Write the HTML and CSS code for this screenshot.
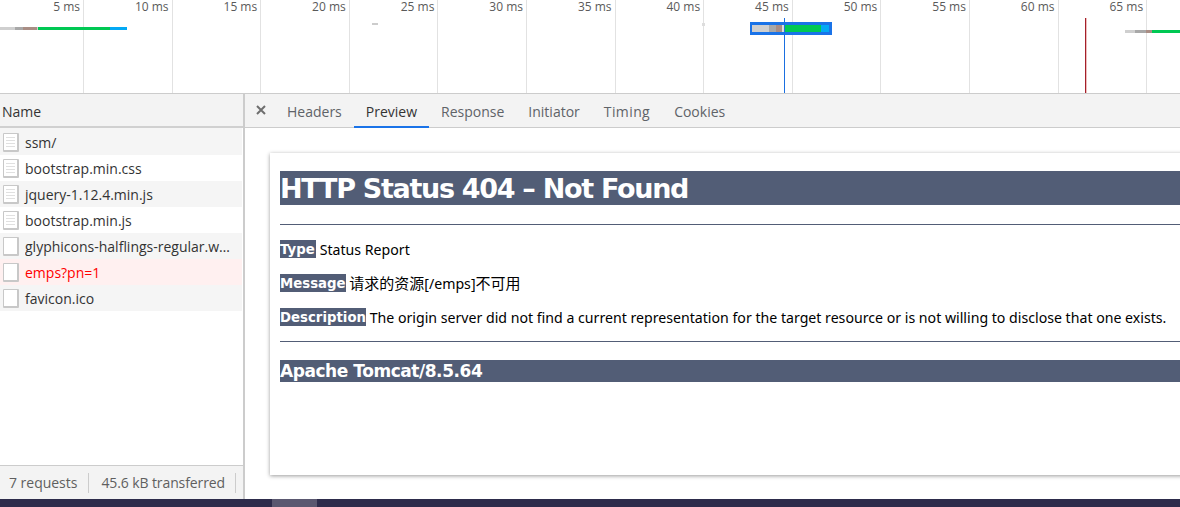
FILE: index.html
```html
<!DOCTYPE html>
<html lang="en">
<head>
<meta charset="utf-8">
<title>Network panel</title>
<link rel="stylesheet" href="styles.css">
</head>
<body>
<div class="app">
  <section class="overview">
    <div class="ticks">
      <div class="tick"><span>5 ms</span></div>
      <div class="tick"><span>10 ms</span></div>
      <div class="tick"><span>15 ms</span></div>
      <div class="tick"><span>20 ms</span></div>
      <div class="tick"><span>25 ms</span></div>
      <div class="tick"><span>30 ms</span></div>
      <div class="tick"><span>35 ms</span></div>
      <div class="tick"><span>40 ms</span></div>
      <div class="tick"><span>45 ms</span></div>
      <div class="tick"><span>50 ms</span></div>
      <div class="tick"><span>55 ms</span></div>
      <div class="tick"><span>60 ms</span></div>
      <div class="tick"><span>65 ms</span></div>
    </div>

    <div class="wf wf-a">
      <i class="seg s-light" style="width:15px"></i><i class="seg s-mid" style="width:8px"></i><i class="seg s-brown" style="width:14px"></i><i class="seg s-light" style="width:1px"></i><i class="seg s-green" style="width:72px"></i><i class="seg s-blue" style="width:17px"></i>
    </div>
    <div class="dot dot-a"></div>
    <div class="dot dot-b"></div>
    <div class="selected">
      <i class="seg s-light" style="width:17px"></i><i class="seg s-mid" style="width:7px"></i><i class="seg s-brown" style="width:6px"></i><i class="seg s-pale" style="width:2px"></i><i class="seg s-green" style="width:37px"></i><i class="seg s-blue" style="width:8px"></i>
    </div>
    <div class="line line-blue"></div>
    <div class="line line-red"></div>
    <div class="wf wf-b">
      <i class="seg s-light" style="width:10px"></i><i class="seg s-mid" style="width:11px"></i><i class="seg s-brown" style="width:6px"></i><i class="seg s-green" style="width:28px"></i>
    </div>
  </section>

  <main class="panes">
    <aside class="list">
      <header class="list-head">Name</header>
      <ul class="rows">
        <li class="row alt"><span class="file doc"><b></b></span>ssm/</li>
        <li class="row"><span class="file doc"><b></b></span>bootstrap.min.css</li>
        <li class="row alt"><span class="file doc"><b></b></span>jquery-1.12.4.min.js</li>
        <li class="row"><span class="file doc"><b></b></span>bootstrap.min.js</li>
        <li class="row alt"><span class="file"></span><span class="clip">glyphicons-halflings-regular.woff2</span></li>
        <li class="row err"><span class="file"></span>emps?pn=1</li>
        <li class="row alt"><span class="file"></span>favicon.ico</li>
      </ul>
      <footer class="status">
        <span class="stat">7 requests</span>
        <span class="stat">45.6 kB transferred</span>
      </footer>
    </aside>

    <section class="detail">
      <nav class="tabs">
        <svg class="close" width="10" height="10" viewBox="0 0 10 10" aria-hidden="true"><path d="M1 1 9 9M9 1 1 9"/></svg>
        <a class="tab">Headers</a>
        <a class="tab active">Preview</a>
        <a class="tab">Response</a>
        <a class="tab">Initiator</a>
        <a class="tab tab-wide">Timing</a>
        <a class="tab">Cookies</a>
      </nav>
      <div class="preview">
        <article class="card">
          <h1>HTTP Status 404 – Not Found</h1>
          <hr class="rule rule-top">
          <p><b>Type</b> Status Report</p>
          <p><b>Message</b> <span class="cjk">请求的资源</span>[/emps]<span class="cjk">不可用</span></p>
          <p><b>Description</b> The origin server did not find a current representation for the target resource or is not willing to disclose that one exists.</p>
          <hr class="rule rule-bottom">
          <h3>Apache Tomcat/8.5.64</h3>
        </article>
      </div>
    </section>
  </main>

  <div class="taskbar"><span class="task-item"></span></div>
</div>
</body>
</html>
```
FILE: styles.css
```css
* { box-sizing: border-box; }
html, body { margin: 0; height: 100%; overflow: hidden; background: #fff; }
body { font-family: "Open Sans", "Noto Sans", "Noto Sans CJK SC", sans-serif; font-size: 14px; color: #333; }

.app { width: 1180px; height: 507px; display: flex; flex-direction: column; overflow: hidden; }

/* Overview timeline */
.overview { position: relative; height: 94px; flex: none; border-bottom: 1px solid #ccc; background: #fff; overflow: hidden; }
.ticks { display: flex; height: 100%; }
.tick { flex: 0 0 88.6px; height: 100%; border-right: 1px solid #e2e2e2; padding-right: 3px; text-align: right; }
.tick:first-child { flex-basis: 84px; }
.tick span { font-size: 12px; line-height: 14px; color: #5a5a5a; white-space: nowrap; display: block; }
.wf { position: absolute; display: flex; height: 3px; }
.wf-a { left: 0; top: 27px; }
.wf-b { left: 1125px; top: 30px; }
.seg { display: block; height: 100%; flex: none; }
.s-light { background: #cfcfcf; }
.s-mid { background: #a8a8a8; }
.s-brown { background: #a98d84; }
.s-pale { background: #dcdcdc; }
.s-green { background: #00c853; }
.s-blue { background: #03a9f4; }
.dot { position: absolute; background: #ccc; }
.dot-a { left: 372px; top: 23px; width: 6px; height: 2px; }
.dot-b { left: 702px; top: 23px; width: 3px; height: 3px; background: #ddd; }
.selected { position: absolute; left: 750px; top: 22px; width: 82px; height: 13px; display: flex; padding: 3px 2px; background: #1a73e8; border: 0; }
.selected .seg { height: 7px; }
.line { position: absolute; top: 18px; bottom: 0; width: 1px; }
.line-blue { left: 784px; background: #1a6fe0; }
.line-red { left: 1085px; width: 2px; background: linear-gradient(90deg, #a3202a 50%, #eebcbc 50%); }

/* Panes */
.panes { flex: 1; min-height: 0; display: flex; }
.list { width: 245px; flex: none; display: flex; flex-direction: column; border-right: 2px solid #ccc; }
.list-head { height: 34px; flex: none; display: flex; align-items: center; padding: 2px 0 0 2px; background: #f3f3f3; border-bottom: 2px solid #d0d0d0; color: #333; font-size: 14px; }
.rows { list-style: none; margin: 0; padding: 0 1px 0 0; flex: 1; background: #fff; }
.row { height: 26px; display: flex; align-items: center; padding-left: 3px; color: #333; font-size: 14px; white-space: nowrap; }
.row:first-child { height: 27px; padding-top: 1px; }
.alt { background: #f5f5f5; }
.err { background: #fff0f0; color: #f00; }
.clip { display: block; width: 210px; overflow: hidden; text-overflow: ellipsis; }
.file { position: relative; flex: none; width: 16px; height: 19px; margin-right: 6px; background: #fff; border: 1px solid #c8c8c8; border-right-width: 2px; border-bottom-width: 2px; border-radius: 1px; }
.file.doc b { position: absolute; left: 2px; right: 2px; top: 3px; bottom: 3px; background: repeating-linear-gradient(180deg, #e0e0e0 0 1px, #fff 1px 3px); }
.status { height: 34px; flex: none; display: flex; align-items: center; background: #f3f3f3; border-top: 1px solid #ccc; color: #5f5f5f; font-size: 14px; }
.stat { display: flex; align-items: center; height: 20px; padding: 0 11px 0 9px; border-right: 1px solid #ccc; white-space: nowrap; letter-spacing: -.02px; }
.stat + .stat { padding: 0 10px 0 12px; letter-spacing: -.1px; }

.detail { flex: 1; min-width: 0; display: flex; flex-direction: column; }
.tabs { height: 34px; flex: none; display: flex; align-items: stretch; padding-left: 11px; background: #f3f3f3; border-bottom: 1px solid #ccc; }
.close { align-self: center; margin: 0 9px 2px 0; flex: none; }
.close path { stroke: #6e6e6e; stroke-width: 2; fill: none; }
.tab { display: flex; align-items: center; padding: 2px 12px 0; color: #5f6368; font-size: 14px; border-bottom: 2px solid transparent; margin-bottom: -1px; }
.tab.active { color: #333; border-bottom-color: #1a73e8; }
.tab-wide { letter-spacing: .4px; }

.preview { flex: 1; min-height: 0; overflow: hidden; background: #fff; padding: 25px 0 0 25px; }
.card { width: 1000px; height: 322px; padding: 18px 10px 0; background: #fff; box-shadow: 0 1px 4px rgba(0,0,0,.4); font-family: "Noto Sans", "Noto Sans CJK SC", sans-serif; color: #000; font-size: 14.15px; }
.card h1 { margin: 0; height: 34px; line-height: 36px; font-family: "DejaVu Sans", sans-serif; font-size: 27px; letter-spacing: -1.3px; font-weight: 700; color: #fff; background: #525d76; white-space: nowrap; }
.card h3 { margin: 18px 0 0; height: 22px; line-height: 23px; font-family: "DejaVu Sans", sans-serif; font-size: 17px; letter-spacing: -.45px; font-weight: 700; color: #fff; background: #525d76; white-space: nowrap; }
.card p { margin: 0 0 16px; height: 18px; line-height: 20px; white-space: nowrap; }
.card p b { display: inline-block; min-width: 36px; height: 18px; line-height: 20px; vertical-align: top; font-family: "DejaVu Sans", sans-serif; font-size: 13.3px; background: #525d76; color: #fff; font-weight: 700; }
.cjk { font-size: 15px; line-height: 0; }
.rule { height: 1px; margin: 0; border: 0; background: #525d76; }
.rule-top { margin: 19px 0 15px; }
.rule-bottom { margin: -1px 0 0; }

.taskbar { height: 8px; flex: none; background: #2d2c4b; padding-left: 272px; }
.task-item { display: block; width: 45px; height: 100%; background: #5a5870; }
```
